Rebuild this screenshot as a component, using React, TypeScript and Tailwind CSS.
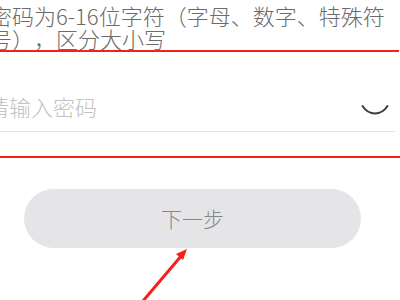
import React from "react";

const font = { fontFamily: '"Noto Sans CJK SC", "Noto Sans", sans-serif' };

export default function App() {
	return (
		<div className="relative h-[300px] w-[400px] overflow-hidden bg-white [text-spacing-trim:space-all]" style={font}>
			{/* Hint */}
			<p className="-ml-[10px] whitespace-nowrap pt-[4px] text-[22px] font-light leading-[23px] text-[#6b6b6b]">
				密码为6-16位字符（字母、数字、特殊符
				<br />
				号），区分大小写
			</p>
			<div className="mr-[1px] h-[2px] bg-[#f3201c]" />

			{/* Password input */}
			<div className="mr-[5px] mt-[39px] box-content flex h-[30px] items-center border-b border-[#e3e3e3] pb-[10px]">
				<span className="-ml-[13px] flex-1 whitespace-nowrap text-[22px] font-light leading-[30px] text-[#c2c2c2]">
					请输入密码
				</span>
				<svg width="28" height="14" viewBox="0 0 28 14" className="mr-[6px] mt-[10px]">
					<path d="M1.5 2 C 8 12, 20 12, 26.5 2" fill="none" stroke="#3d3d3d" strokeWidth="2" strokeLinecap="round" />
				</svg>
			</div>
			<div className="mt-[24px] h-[2px] bg-[#f3201c]" />

			{/* Button */}
			<div className="mt-[31px] pl-[24px]">
				<button className="flex h-[59px] w-[337px] items-center justify-center rounded-full bg-[#e5e5e7] text-[21px] font-light text-[#878787]">
					下一步
				</button>
			</div>

			{/* Annotation arrow */}
			<svg className="absolute left-0 top-0" width="400" height="300" viewBox="0 0 400 300">
				<line x1="143" y1="301" x2="182" y2="255" stroke="#f3201c" strokeWidth="3" />
				<polygon points="187,249 176,254 183,260" fill="#f3201c" />
			</svg>
		</div>
	);
}
